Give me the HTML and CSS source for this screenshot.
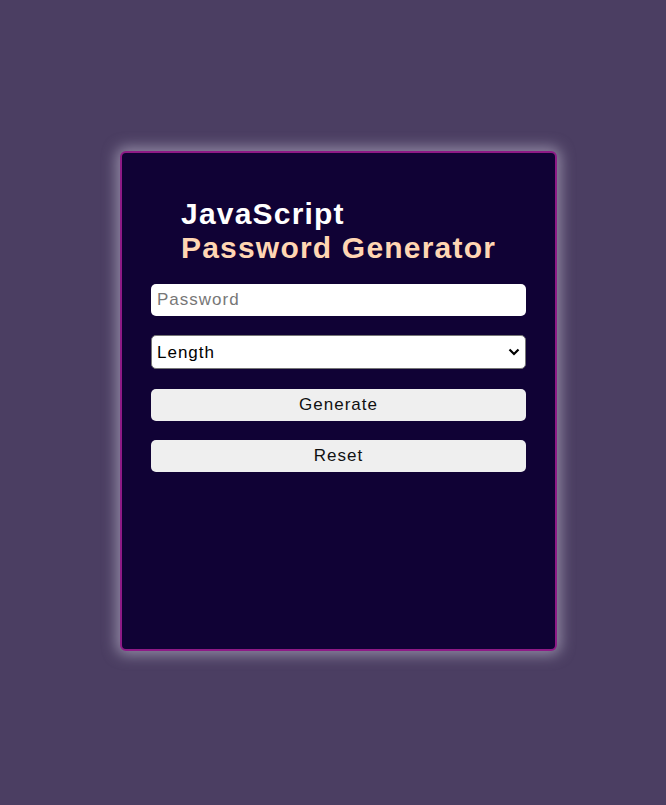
FILE: index.html
```html
<!DOCTYPE html>
<html>
<head>
<meta charset="utf-8">
<link rel="stylesheet" href="styles.css">
</head>
<body>
<div class="page">
  <div class="card">
    <h1 class="title"><span class="t1">JavaScript</span><span class="t2">Password Generator</span></h1>
    <div class="form">
      <input class="field" type="text" placeholder="Password">
      <select class="field sel"><option>Length</option></select>
      <button class="btn">Generate</button>
      <button class="btn">Reset</button>
    </div>
  </div>
</div>
</body>
</html>
```
FILE: styles.css
```css
html, body { margin: 0; padding: 0; }
body { background: #4b3e62; font-family: "Liberation Sans", Arial, sans-serif; }
.page { height: 805px; display: flex; align-items: flex-start; justify-content: center; padding-left: 11px; box-sizing: border-box; padding-top: 151px; }
.card {
  width: 437px; height: 500px; box-sizing: border-box;
  background: #100235; border: 2px solid #8e1a86; border-radius: 6px;
  box-shadow: 0 0 14px 4px rgba(200,195,215,0.55);
  display: flex; flex-direction: column; align-items: center;
}
.title { margin: 44px 0 0 0; width: 316px; padding-left: 1px; font-size: 30px; font-weight: bold; letter-spacing: 1.2px; line-height: 34px; display: flex; flex-direction: column; }
.t1 { color: #ffffff; }
.t2 { color: #ffd6b3; }
.form { margin-top: 19px; width: 375px; display: flex; flex-direction: column; }
.field { font-family: "Liberation Sans", Arial, sans-serif; font-size: 17px; letter-spacing: 1px; box-sizing: border-box; width: 375px; border-radius: 5px; }
input.field { height: 32px; border: none; padding: 0 6px; background: #fff; color: #000; outline: none; }
input.field::placeholder { color: #777; }
.sel {
  margin-top: 19px; height: 34px; border: 1px solid #767676; background-color: #fff; color: #000; padding: 0 5px;
  appearance: none; -webkit-appearance: none;
  background-image: url("data:image/svg+xml,%3Csvg xmlns='http://www.w3.org/2000/svg' width='12' height='8' viewBox='0 0 12 8'%3E%3Cpath d='M1.5 1.5 L6 6 L10.5 1.5' fill='none' stroke='%23000' stroke-width='2.2'/%3E%3C/svg%3E");
  background-repeat: no-repeat; background-position: right 5px center;
}
.btn { margin-top: 20px; height: 32px; border: none; border-radius: 5px; background: #efefef; color: #111; font-family: "Liberation Sans", Arial, sans-serif; font-size: 17px; letter-spacing: 1px; }
.btn + .btn { margin-top: 19px; }
```
